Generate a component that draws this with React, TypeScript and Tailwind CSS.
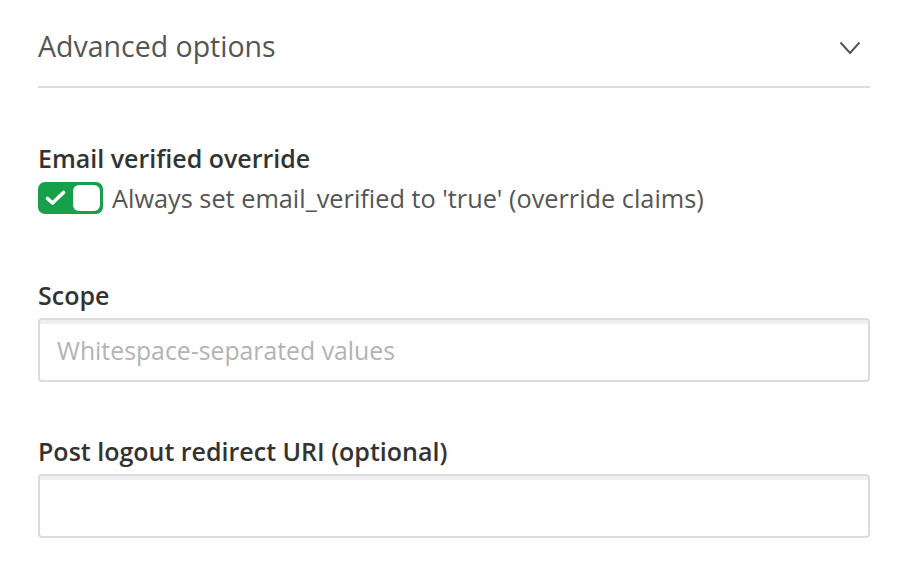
import React from "react";

const Field = ({ label, placeholder }: { label: string; placeholder?: string }) => {
  return (
    <div className="flex flex-col">
      <label className="text-[25px] font-semibold leading-[30px] text-[#333]">{label}</label>
      <input
        type="text"
        placeholder={placeholder}
        className="mt-[8px] h-[64px] w-full rounded-[4px] border-2 border-[#dcdcdc] bg-white px-[17px] text-[24.8px] text-[#333] shadow-[inset_0_4px_0_#efefef] outline-none placeholder:text-[#b3b3b3]"
      />
    </div>
  );
};

const App = () => {
  return (
    <div className="h-[582px] w-[908px] bg-white px-[38px] pt-[26px] font-['Open_Sans',sans-serif]">
      <div className="flex items-center justify-between border-b-2 border-[#dedede] pb-[20px]">
        <h2 className="text-[28.5px] leading-[40px] text-[#555]">Advanced options</h2>
        <svg width="22" height="14" viewBox="0 0 22 14" className="mr-[9px] mt-[4px]">
          <path d="M1.5 1.5 L11 12 L20.5 1.5" fill="none" stroke="#555" strokeWidth="2" />
        </svg>
      </div>

      <div className="mt-[55px]">
        <div className="text-[25px] font-semibold leading-[30px] text-[#333]">Email verified override</div>
        <div className="mt-[9px] flex items-center gap-[9px]">
          <div className="flex h-[32px] w-[65px] items-center justify-between rounded-[7px] bg-[#16a04a] pl-[7px] pr-[3px]">
            <svg width="21" height="16" viewBox="0 0 21 16">
              <path d="M2.5 8.5 L7.5 13 L18.5 2.5" fill="none" stroke="#fff" strokeWidth="3.6" strokeLinecap="round" strokeLinejoin="round" />
            </svg>
            <div className="h-[26px] w-[27px] rounded-[6px] bg-white" />
          </div>
          <span className="text-[25.3px] leading-[30px] text-[#555]">
            Always set email_verified to 'true' (override claims)
          </span>
        </div>
      </div>

      <div className="mt-[66px] flex flex-col gap-[54px]">
        <Field label="Scope" placeholder="Whitespace-separated values" />
        <Field label="Post logout redirect URI (optional)" />
      </div>
    </div>
  );
};

export default App;
